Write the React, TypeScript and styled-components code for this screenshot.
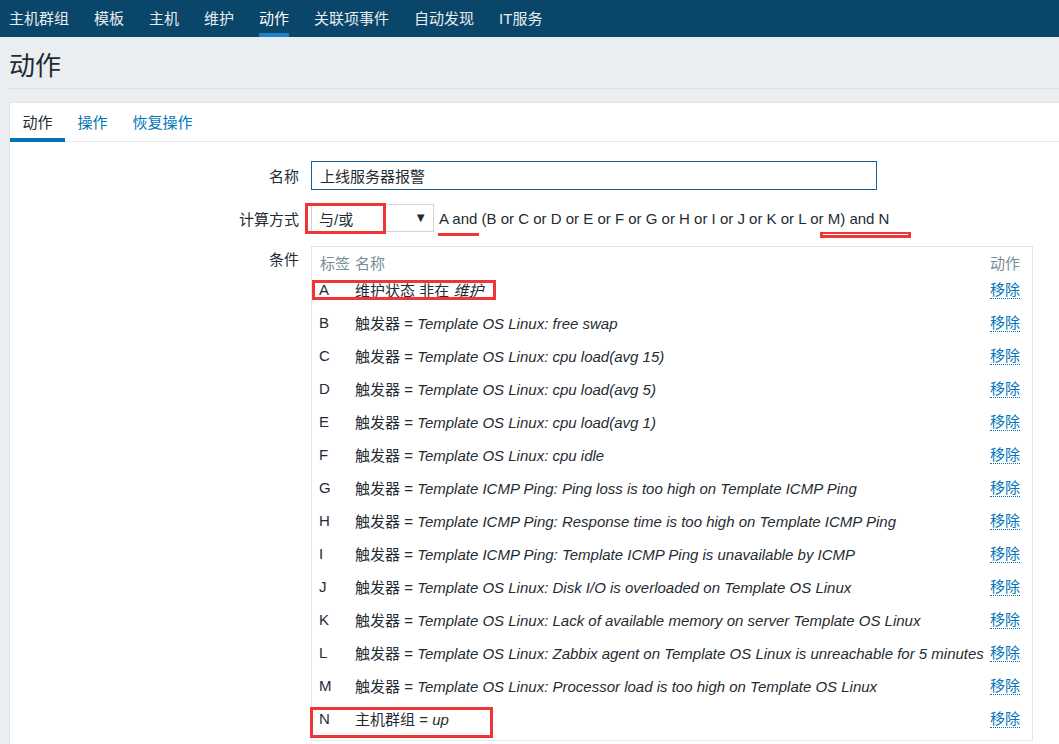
import React from "react";
import styled, { createGlobalStyle } from "styled-components";

type Condition = {
  label: string;
  kind: string;
  op: string;
  value: string;
};

const navItems = ["主机群组", "模板", "主机", "维护", "动作", "关联项事件", "自动发现", "IT服务"];
const tabs = ["动作", "操作", "恢复操作"];

const conditions: Condition[] = [
  { label: "A", kind: "维护状态", op: "非在", value: "维护" },
  { label: "B", kind: "触发器", op: "=", value: "Template OS Linux: free swap" },
  { label: "C", kind: "触发器", op: "=", value: "Template OS Linux: cpu load(avg 15)" },
  { label: "D", kind: "触发器", op: "=", value: "Template OS Linux: cpu load(avg 5)" },
  { label: "E", kind: "触发器", op: "=", value: "Template OS Linux: cpu load(avg 1)" },
  { label: "F", kind: "触发器", op: "=", value: "Template OS Linux: cpu idle" },
  { label: "G", kind: "触发器", op: "=", value: "Template ICMP Ping: Ping loss is too high on Template ICMP Ping" },
  { label: "H", kind: "触发器", op: "=", value: "Template ICMP Ping: Response time is too high on Template ICMP Ping" },
  { label: "I", kind: "触发器", op: "=", value: "Template ICMP Ping: Template ICMP Ping is unavailable by ICMP" },
  { label: "J", kind: "触发器", op: "=", value: "Template OS Linux: Disk I/O is overloaded on Template OS Linux" },
  { label: "K", kind: "触发器", op: "=", value: "Template OS Linux: Lack of available memory on server Template OS Linux" },
  { label: "L", kind: "触发器", op: "=", value: "Template OS Linux: Zabbix agent on Template OS Linux is unreachable for 5 minutes" },
  { label: "M", kind: "触发器", op: "=", value: "Template OS Linux: Processor load is too high on Template OS Linux" },
  { label: "N", kind: "主机群组", op: "=", value: "up" },
];

const GlobalStyle = createGlobalStyle`
  html, body {
    margin: 0;
    padding: 0;
    background: #ebeef0;
    overflow: hidden;
  }
  body {
    font-family: "Liberation Sans", Arial, "Noto Sans CJK SC", sans-serif;
    font-size: 15px;
    color: #1f2c33;
  }
`;

const Page = styled.div`
  position: relative;
  width: 1059px;
  height: 744px;
  overflow: hidden;
`;

// 상단 메뉴
const TopNav = styled.nav`
  height: 37px;
  background: #0a466a;
  display: flex;
  padding-left: 9px;
  gap: 25px;
`;

const NavItem = styled.a<{ $active?: boolean }>`
  position: relative;
  display: flex;
  align-items: center;
  height: 37px;
  color: ${({ $active }) => ($active ? "#ffffff" : "#e8edf0")};
  text-decoration: none;
  white-space: nowrap;
  padding-bottom: 2px;
  box-sizing: border-box;

  &::after {
    content: "";
    display: ${({ $active }) => ($active ? "block" : "none")};
    position: absolute;
    left: 0;
    right: 0;
    bottom: 0;
    height: 4px;
    background: #1f7fc8;
  }
`;

const Header = styled.header`
  margin-left: 9px;
  height: 52px;
  border-bottom: 1px solid #dadfe2;
  display: flex;
  align-items: center;
  padding-top: 2px;
  box-sizing: border-box;
`;

const Title = styled.h1`
  margin: 0;
  font-size: 26px;
  font-weight: normal;
  color: #1f2c33;
`;

const Panel = styled.section`
  margin: 13px 0 0 9px;
  width: 1080px;
  background: #ffffff;
  border: 1px solid #dfe4e7;
  min-height: 700px;
`;

const TabBar = styled.div`
  display: flex;
  height: 38px;
  border-bottom: 1px solid #e6e9eb;
`;

const Tab = styled.a<{ $active?: boolean }>`
  position: relative;
  display: flex;
  align-items: center;
  padding: 0 12.5px 1px 12.5px;
  height: 38px;
  box-sizing: border-box;
  color: ${({ $active }) => ($active ? "#1f2c33" : "#0275b8")};
  text-decoration: none;

  &::after {
    content: "";
    display: ${({ $active }) => ($active ? "block" : "none")};
    position: absolute;
    left: 0;
    right: 0;
    bottom: -1px;
    height: 4px;
    background: #0275b8;
  }
`;

const Form = styled.div`
  display: grid;
  grid-template-columns: 289px auto;
  column-gap: 12px;
  row-gap: 14px;
  padding-top: 19px;
  align-items: center;
  justify-content: start;
`;

const Label = styled.label<{ $top?: boolean }>`
  text-align: right;
  align-self: ${({ $top }) => ($top ? "start" : "center")};
  padding-top: ${({ $top }) => ($top ? "2px" : "0")};
`;

const TextInput = styled.input`
  width: 566px;
  height: 29px;
  box-sizing: border-box;
  border: 1px solid #1a5e92;
  padding: 0 8px;
  font: inherit;
  color: #1f2c33;
  outline: none;
`;

const CalcRow = styled.div`
  display: flex;
  align-items: center;
  gap: 5px;
`;

const FakeSelect = styled.div`
  width: 123px;
  height: 28px;
  box-sizing: border-box;
  border: 1px solid #cfd5d9;
  display: flex;
  align-items: center;
  justify-content: space-between;
  padding: 0 6px 0 7px;
  background: #fff;
`;

const Arrow = styled.span`
  font-size: 13px;
  color: #1f2c33;
  padding-bottom: 2px;
`;

const Expression = styled.span`
  white-space: nowrap;
  padding-top: 1px;
`;

const CondBox = styled.div`
  width: 722px;
  box-sizing: border-box;
  border: 1px solid #e2e6e8;
  padding: 4px 12px 5px 7px;
`;

const CondRow = styled.div<{ $head?: boolean }>`
  display: grid;
  grid-template-columns: 36px 1fr auto;
  align-items: center;
  height: ${({ $head }) => ($head ? "22px" : "33px")};
  color: ${({ $head }) => ($head ? "#768d99" : "#1f2c33")};
  white-space: nowrap;
`;

const HeadLabel = styled.span`
  padding-left: 1px;
`;

const ActionHead = styled.span`
  text-align: right;
`;

const Value = styled.i`
  font-style: italic;
`;

const RemoveLink = styled.a`
  color: #0275b8;
  text-decoration: none;
  border-bottom: 1px dotted #0275b8;
  line-height: 17px;
  cursor: pointer;
`;

// 빨간 표시
const Mark = styled.div<{ $x: number; $y: number; $w: number; $h: number }>`
  position: absolute;
  left: ${({ $x }) => $x}px;
  top: ${({ $y }) => $y}px;
  width: ${({ $w }) => $w}px;
  height: ${({ $h }) => $h}px;
  box-sizing: border-box;
  border: 3px solid #ef3636;
  pointer-events: none;
`;

const UnderMark = styled.div<{ $x: number; $y: number; $w: number }>`
  position: absolute;
  left: ${({ $x }) => $x}px;
  top: ${({ $y }) => $y}px;
  width: ${({ $w }) => $w}px;
  height: 3px;
  background: #ef3636;
`;

const DoubleMark = styled.div`
  position: absolute;
  left: 820px;
  top: 232px;
  width: 91px;
  height: 6px;
  background: #ef3636;

  &::after {
    content: "";
    position: absolute;
    left: 3px;
    right: 3px;
    top: 2px;
    height: 1px;
    background: #ffffff;
  }
`;

export default function App() {
  return (
    <Page>
      <GlobalStyle />
      <TopNav>
        {navItems.map((item) => (
          <NavItem key={item} $active={item === "动作"}>
            {item}
          </NavItem>
        ))}
      </TopNav>

      <Header>
        <Title>动作</Title>
      </Header>

      <Panel>
        <TabBar>
          {tabs.map((t, i) => (
            <Tab key={t} $active={i === 0}>
              {t}
            </Tab>
          ))}
        </TabBar>

        <Form>
          <Label>名称</Label>
          <TextInput defaultValue="上线服务器报警" />

          <Label>计算方式</Label>
          <CalcRow>
            <FakeSelect>
              <span>与/或</span>
              <Arrow>▼</Arrow>
            </FakeSelect>
            <Expression>A and (B or C or D or E or F or G or H or I or J or K or L or M) and N</Expression>
          </CalcRow>

          <Label $top>条件</Label>
          <CondBox>
            <CondRow $head>
              <HeadLabel>标签</HeadLabel>
              <span>名称</span>
              <ActionHead>动作</ActionHead>
            </CondRow>
            {conditions.map((c) => (
              <CondRow key={c.label}>
                <span>{c.label}</span>
                <span>
                  {c.kind} {c.op} <Value>{c.value}</Value>
                </span>
                <RemoveLink>移除</RemoveLink>
              </CondRow>
            ))}
          </CondBox>
        </Form>
      </Panel>

      <Mark $x={305} $y={203} $w={81} $h={31} />
      <UnderMark $x={438} $y={233} $w={41} />
      <DoubleMark />
      <Mark $x={312} $y={280} $w={184} $h={20} />
      <Mark $x={310} $y={707} $w={183} $h={31} />
    </Page>
  );
}
